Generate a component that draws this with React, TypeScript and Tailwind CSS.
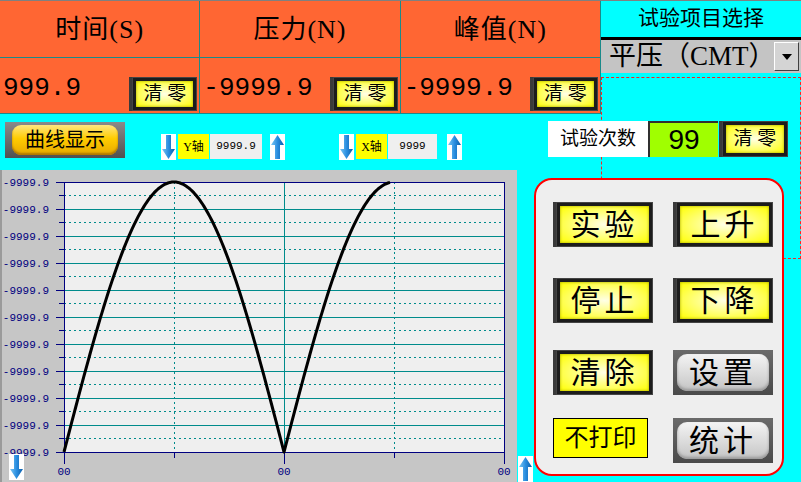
import React from "react";

// y positions of the horizontal grid lines inside the chart panel
const yTicks = Array.from({ length: 11 }, (_, i) => 12 + i * 27);
const xMajor = [62, 282, 502];
const xMinor = [172, 392];

// load curve sampled as |sin|, stopping short of the second peak
const curve = (() => {
  const pts: string[] = [];
  for (let x = 62; x <= 388; x += 2) {
    const y = 282 - 270 * Math.abs(Math.sin((Math.PI * (x - 62)) / 220));
    pts.push(`${x},${y.toFixed(1)}`);
  }
  return pts.join(" ");
})();

function Arrow({ up }: { up?: boolean }) {
  return (
    <svg width="15" height="26" viewBox="0 0 15 26" className="block bg-white">
      <defs>
        <linearGradient id="arrowBlue" x1="0" x2="1" y1="0" y2="0">
          <stop offset="0" stopColor="#7cc8f4" />
          <stop offset="0.5" stopColor="#2a8ee0" />
          <stop offset="1" stopColor="#0b5eaa" />
        </linearGradient>
      </defs>
      <path
        d={
          up
            ? "M7.5 1 L14 11 L10 11 L10 25 L5 25 L5 11 L1 11Z"
            : "M7.5 25 L14 15 L10 15 L10 1 L5 1 L5 15 L1 15Z"
        }
        fill="url(#arrowBlue)"
      />
    </svg>
  );
}

function YellowButton({ label, className, text }: { label: string; className: string; text: string }) {
  return (
    <div className={`bg-[#1c1c1c] border-l-[3px] border-[#3a3a3a] p-[4px] shadow-[inset_0_0_0_1px_#444] ${className}`}>
      <div
        className={`h-full w-full flex items-center justify-center bg-[radial-gradient(ellipse_at_center,#ffffe6_0%,#ffff80_45%,#ffff00_100%)] shadow-[inset_0_0_3px_#a0a000] text-black ${text}`}
      >
        {label}
      </div>
    </div>
  );
}

function GrayButton({ label, className }: { label: string; className: string }) {
  return (
    <div className={`bg-[linear-gradient(#6a6a6a,#4a4a4a)] p-[4px] ${className}`}>
      <div className="h-full w-full rounded-[10px] flex items-center justify-center bg-[linear-gradient(#f4f4f4,#d8d8d8_60%,#c4c4c4)] shadow-[inset_0_-2px_3px_#999] text-[30px] tracking-[4px] text-black">
        {label}
      </div>
    </div>
  );
}

function HeadCell({ title, value }: { title: string; value: string }) {
  return (
    <div className="flex flex-col border-r border-[#1a8a8a]">
      <div className="h-[57px] flex items-center justify-center text-[26px] tracking-[1px] text-black border-b border-[#1a8a8a]">
        {title}
      </div>
      <div className="h-[55px] flex items-start pt-[13px] pl-[3px] pr-[2px]">
        <span className="font-['Liberation_Mono',monospace] text-[26px] leading-[34px] text-black flex-1">
          {value}
        </span>
        <YellowButton label="清 零" className="w-[68px] h-[34px] mt-[6px]" text="text-[19px]" />
      </div>
    </div>
  );
}

export default function App() {
  return (
    <div className="relative w-[801px] h-[482px] overflow-hidden bg-[#00ffff] font-['Liberation_Serif','Noto_Sans_CJK_SC',serif]">
      {/* dashed selection frame sitting behind the controls */}
      <div className="absolute left-[601px] top-[77px] w-[200px] h-[182px] border border-dashed border-[#ff2020]" />

      {/* readout row */}
      <div className="relative flex h-[114px] border-t border-[#808080]">
        <div className="grid grid-cols-3 w-[601px] bg-[#ff6633] border-b border-[#1a8a8a]">
          <HeadCell title="时间(S)" value="999.9" />
          <HeadCell title="压力(N)" value="-9999.9" />
          <HeadCell title="峰值(N)" value="-9999.9" />
        </div>
        <div className="flex-1 flex flex-col">
          <div className="h-[36px] flex items-center justify-center text-[21px] text-black">试验项目选择</div>
          <div className="h-[36px] flex border-t-[3px] border-black bg-[#c4c4c4]">
            <div className="flex-1 flex items-center pl-[8px] text-[27px] text-black leading-none">平压（CMT）</div>
            <div className="w-[25px] m-[2px] bg-[#d4d4d4] border border-t-white border-l-white border-r-[#404040] border-b-[#404040] flex items-center justify-center">
              <svg width="10" height="6" viewBox="0 0 10 6">
                <path d="M0 0 H10 L5 6Z" fill="#000" />
              </svg>
            </div>
          </div>
        </div>
      </div>

      {/* toolbar row */}
      <div className="relative h-[56px] flex items-start">
        <div className="ml-[5px] mt-[8px] w-[120px] h-[36px] bg-[linear-gradient(#8a8a8a,#505050)] px-[7px] py-[3px]">
          <div className="h-full rounded-[9px] flex items-center justify-center bg-[linear-gradient(#ffe680,#ffcc00_45%,#e6a800)] shadow-[inset_0_-2px_2px_#b07800] text-[20px] text-black">
            曲线显示
          </div>
        </div>

        <div className="ml-[36px] mt-[20px] flex items-center h-[25px]">
          <Arrow />
          <div className="ml-[2px] w-[31px] h-[25px] bg-[#ffff00] flex items-center justify-center text-[12px] text-black">Y轴</div>
          <div className="ml-[1px] w-[52px] h-[25px] bg-[#efefef] flex items-center justify-center font-['Liberation_Mono',monospace] text-[11px] text-black">9999.9</div>
          <div className="ml-[8px]"><Arrow up /></div>
        </div>

        <div className="ml-[54px] mt-[20px] flex items-center h-[25px]">
          <Arrow />
          <div className="ml-[2px] w-[31px] h-[25px] bg-[#ffff00] flex items-center justify-center text-[12px] text-black">X轴</div>
          <div className="ml-[1px] w-[49px] h-[25px] bg-[#efefef] flex items-center justify-center font-['Liberation_Mono',monospace] text-[11px] text-black">9999</div>
          <div className="ml-[10px]"><Arrow up /></div>
        </div>

        <div className="ml-[86px] mt-[7px] flex h-[36px]">
          <div className="w-[100px] bg-white flex items-center justify-center text-[19px] text-black">试验次数</div>
          <div className="w-[70px] bg-[#a0ff00] border-t-2 border-l-2 border-[#303030] flex items-center justify-center font-['Liberation_Sans',sans-serif] text-[28px] text-black">99</div>
          <YellowButton label="清 零" className="ml-[1px] w-[69px] h-[36px]" text="text-[19px]" />
        </div>
      </div>

      {/* chart + control panel */}
      <div className="relative flex h-[312px]">
        <div className="relative w-[517px] h-full bg-[#c6c6c6] border-l-2 border-[#9a9a9a]">
          <svg width="515" height="312" className="block">
            <rect x="62" y="12" width="440" height="270" fill="#efefef" />
            <g shapeRendering="crispEdges">
              {yTicks.slice(1, -1).map((y) => (
                <line key={y} x1="62" x2="502" y1={y} y2={y} stroke="#008b8b" />
              ))}
              {yTicks.slice(0, -1).map((y) => (
                <line key={`m${y}`} x1="62" x2="502" y1={y + 13.5} y2={y + 13.5} stroke="#008b8b" strokeDasharray="2 3" />
              ))}
              <line x1="282" x2="282" y1="12" y2="282" stroke="#008b8b" />
              {xMinor.map((x) => (
                <line key={x} x1={x + 0.5} x2={x + 0.5} y1="12" y2="282" stroke="#008b8b" strokeDasharray="2 3" />
              ))}
              <rect x="62" y="12" width="440" height="270" fill="none" stroke="#000080" />
              {yTicks.map((y) => (
                <line key={`t${y}`} x1="54" x2="62" y1={y} y2={y} stroke="#000080" />
              ))}
              {yTicks.slice(0, -1).map((y) => (
                <line key={`tm${y}`} x1="57" x2="62" y1={y + 13.5} y2={y + 13.5} stroke="#000080" />
              ))}
              {[...xMajor, ...xMinor].map((x) => (
                <line key={`xt${x}`} x1={x} x2={x} y1="282" y2={xMajor.includes(x) ? 294 : 288} stroke="#000080" />
              ))}
            </g>
            {yTicks.map((y) => (
              <text key={`l${y}`} x="47" y={y + 4} textAnchor="end" fontSize="11" fill="#000080" fontFamily="'Liberation Mono', monospace">
                -9999.9
              </text>
            ))}
            {xMajor.map((x) => (
              <text key={`xl${x}`} x={x} y="305" textAnchor="middle" fontSize="11" fill="#000080" fontFamily="'Liberation Mono', monospace">
                00
              </text>
            ))}
            <polyline points={curve} fill="none" stroke="#000" strokeWidth="3" strokeLinejoin="round" />
          </svg>
          <div className="absolute left-[7px] bottom-[2px]"><Arrow /></div>
        </div>

        <div className="w-[17px] flex flex-col justify-end items-center">
          <Arrow up />
        </div>

        <div className="mt-[8px] w-[250px] h-[298px] rounded-[18px] border-2 border-[#ff0000] bg-[#eeeeee] pl-[17px] pr-[9px]">
          <div className="mt-[22px] flex justify-between">
            <YellowButton label="实验" className="w-[100px] h-[45px]" text="text-[30px] tracking-[4px]" />
            <YellowButton label="上升" className="w-[100px] h-[45px]" text="text-[30px] tracking-[4px]" />
          </div>
          <div className="mt-[31px] flex justify-between">
            <YellowButton label="停止" className="w-[100px] h-[45px]" text="text-[30px] tracking-[4px]" />
            <YellowButton label="下降" className="w-[100px] h-[45px]" text="text-[30px] tracking-[4px]" />
          </div>
          <div className="mt-[27px] flex justify-between">
            <YellowButton label="清除" className="w-[100px] h-[45px]" text="text-[30px] tracking-[4px]" />
            <GrayButton label="设置" className="w-[100px] h-[45px]" />
          </div>
          <div className="mt-[23px] flex justify-between items-start">
            <div className="w-[95px] h-[40px] bg-[#ffff00] border border-black flex items-center justify-center text-[24px] text-black">
              不打印
            </div>
            <GrayButton label="统计" className="w-[100px] h-[45px]" />
          </div>
        </div>
      </div>
    </div>
  );
}
